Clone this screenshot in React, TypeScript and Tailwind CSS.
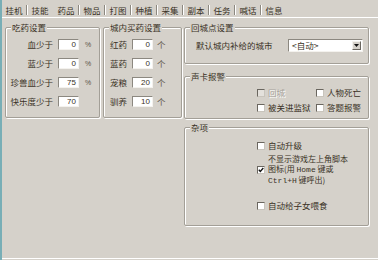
import React from "react";

const tabs = ["挂机", "技能", "药品", "物品", "打图", "种植", "采集", "副本", "任务", "喊话", "信息"];

function Group({ title, className, children }: { title: string; className: string; children?: React.ReactNode }) {
  return (
    <div className={`relative rounded-[2px] border border-[#a39f97] shadow-[inset_1px_1px_0_#fff,1px_1px_0_#fff] ${className}`}>
      <span className="absolute -top-[6px] left-[5px] bg-[#d5d1ca] px-[1px] leading-[11px]">{title}</span>
      {children}
    </div>
  );
}

function NumBox({ value }: { value: string }) {
  return (
    <div className="h-[11px] w-[21px] shrink-0 border border-[#8c8880] border-b-[#f4f2ee] border-r-[#f4f2ee] bg-white pr-[2px] text-right font-['Liberation_Sans'] text-[8px] leading-[9px]">
      {value}
    </div>
  );
}

function Check({ checked, disabled }: { checked?: boolean; disabled?: boolean }) {
  return (
    <span
      className={`flex h-[8px] w-[8px] shrink-0 items-center justify-center border border-[#6a665f] border-b-[#c8c4bc] border-r-[#c8c4bc] ${
        disabled ? "bg-[#e4e1dc]" : "bg-white"
      }`}
    >
      {checked && (
        <svg width="6" height="6" viewBox="0 0 6 6">
          <path d="M0.8 2.8 L2.3 4.4 L5.3 1" fill="none" stroke="#111" strokeWidth="1.4" />
        </svg>
      )}
    </span>
  );
}

function CheckItem({ label, checked, disabled }: { label: string; checked?: boolean; disabled?: boolean }) {
  return (
    <div className="flex h-[11px] items-center">
      <Check checked={checked} disabled={disabled} />
      <span className={`ml-[3px] ${disabled ? "text-[#a8a49c] [text-shadow:1px_1px_0_#fff]" : ""}`}>{label}</span>
    </div>
  );
}

export default function App() {
  const medRows = [
    { label: "血少于", value: "0", pct: true },
    { label: "蓝少于", value: "0", pct: true },
    { label: "珍兽血少于", value: "75", pct: true },
    { label: "快乐度少于", value: "70", pct: false },
  ];
  const buyRows = [
    { label: "红药", value: "0" },
    { label: "蓝药", value: "0" },
    { label: "宠粮", value: "20" },
    { label: "驯养", value: "10" },
  ];

  return (
    <div className="flex h-[260px] w-[378px] flex-col overflow-hidden border-l-2 border-[#78aeb6] bg-[#d5d1ca] font-['Noto_Sans_CJK_SC',sans-serif] text-[8.5px] leading-[11px] text-[#3a3226]">
      {/* tab strip */}
      <div className="flex h-[17px] items-end pb-[1px] pl-[1px]">
        {tabs.map((t, i) => (
          <React.Fragment key={t}>
            {i > 0 && (
              <span className={`mx-[1px] mb-[1px] h-[10px] w-[2px] self-end border-l border-[#8c8880] ${i === 2 ? "border-l-transparent" : "border-r border-r-white"}`} />
            )}
            <span className="w-[22px] text-center">{t}</span>
          </React.Fragment>
        ))}
      </div>

      {/* panel */}
      <div className="mb-[1px] flex flex-1 border-y border-white pl-[3px] pt-[9px]">
        <Group title="吃药设置" className="h-[91px] w-[95px]">
          <div className="flex flex-col gap-[8px] pt-[11px]">
            {medRows.map((r) => (
              <div key={r.label} className="flex h-[11px] items-center">
                <span className="w-[47px] text-right">{r.label}</span>
                <span className="ml-[5px]">
                  <NumBox value={r.value} />
                </span>
                {r.pct && <span className="ml-[6px] font-['Liberation_Sans'] text-[7px] text-[#5a5246]">%</span>}
              </div>
            ))}
          </div>
        </Group>

        <Group title="城内买药设置" className="ml-[3px] h-[91px] w-[79px]">
          <div className="flex flex-col gap-[8px] pl-[6px] pt-[11px]">
            {buyRows.map((r) => (
              <div key={r.label} className="flex h-[11px] items-center">
                <span className="w-[22px]">{r.label}</span>
                <NumBox value={r.value} />
                <span className="ml-[4px] text-[#5a5246]">个</span>
              </div>
            ))}
          </div>
        </Group>

        <div className="ml-[2px] flex w-[185px] flex-col">
          <Group title="回城点设置" className="h-[37px]">
            <div className="flex items-center pl-[11px] pr-[5px] pt-[11px]">
              <span>默认城内补给的城市</span>
              <div className="ml-auto flex h-[13px] w-[75px] items-center border border-[#8c8880] border-b-[#f4f2ee] border-r-[#f4f2ee] bg-white">
                <span className="flex-1 pl-[3px]">&lt;自动&gt;</span>
                <span className="mr-[1px] flex h-[9px] w-[9px] items-center justify-center border border-[#f4f2ee] border-b-[#6a665f] border-r-[#6a665f] bg-[#d5d1ca]">
                  <svg width="5" height="3" viewBox="0 0 5 3">
                    <path d="M0 0 H5 L2.5 3 Z" fill="#111" />
                  </svg>
                </span>
              </div>
            </div>
          </Group>

          <Group title="声卡报警" className="mt-[12px] h-[43px]">
            <div className="grid grid-cols-[59px_auto] gap-y-[4px] pl-[72px] pt-[10px]">
              <CheckItem label="回城" disabled />
              <CheckItem label="人物死亡" />
              <CheckItem label="被关进监狱" />
              <CheckItem label="答题报警" />
            </div>
          </Group>

          <Group title="杂项" className="mt-[8px] h-[99px]">
            <div className="flex flex-col pl-[72px] pt-[12px]">
              <CheckItem label="自动升级" />
              <div className="mt-[3px] flex items-center">
                <Check checked />
                <div className="ml-[3px] flex flex-col text-[8px] leading-[10px]">
                  <span>不显示游戏左上角脚本</span>
                  <span>
                    图标(用 <span className="font-['Liberation_Mono']">Home</span> 键或
                  </span>
                  <span>
                    <span className="font-['Liberation_Mono']">Ctrl+H</span> 键呼出)
                  </span>
                </div>
              </div>
              <div className="mt-[14px]">
                <CheckItem label="自动给子女喂食" />
              </div>
            </div>
          </Group>
        </div>
      </div>
    </div>
  );
}
